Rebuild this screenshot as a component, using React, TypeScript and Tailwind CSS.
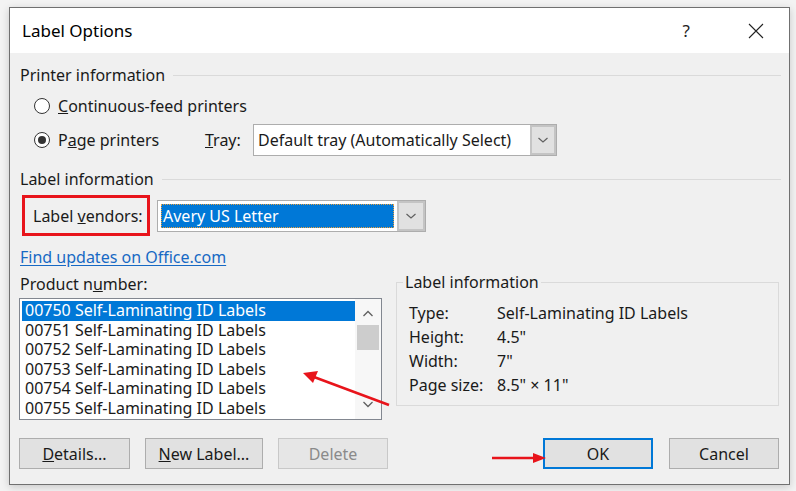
import React from "react";

const font = { fontFamily: '"Noto Sans", "Open Sans", sans-serif' };

function Radio({ checked }: { checked?: boolean }) {
  return (
    <span className="w-[16px] h-[16px] rounded-full border border-[#333] bg-white flex items-center justify-center shrink-0">
      {checked && <span className="w-[8px] h-[8px] rounded-full bg-[#333]" />}
    </span>
  );
}

function Chevron() {
  return (
    <svg width="12" height="8" viewBox="0 0 12 8">
      <path d="M1.5 2 L6 6 L10.5 2" fill="none" stroke="#606060" strokeWidth="1.2" />
    </svg>
  );
}

function Combo({ width, children }: { width: string; children: React.ReactNode }) {
  return (
    <div className={`flex h-[32px] border border-[#adadad] bg-white ${width}`}>
      <div className="flex-1 flex items-center px-[4px] overflow-hidden">{children}</div>
      <div className="w-[26px] bg-[#e1e1e1] border-[2px] border-[#c4c4c4] flex items-center justify-center">
        <Chevron />
      </div>
    </div>
  );
}

function SectionHeader({ title }: { title: string }) {
  return (
    <div className="flex items-center gap-[8px] h-[20px]">
      <span className="text-[16px] leading-[20px] text-[#1a1a1a] whitespace-nowrap">{title}</span>
      <div className="flex-1 h-px bg-[#dadada]" />
    </div>
  );
}

function Btn({ children, w, primary, disabled }: { children: React.ReactNode; w: string; primary?: boolean; disabled?: boolean }) {
  return (
    <button
      className={`h-[31px] ${w} bg-[#e1e1e1] text-[16px] flex items-center justify-center ${
        primary ? "border-2 border-[#0078d7]" : "border border-[#adadad]"
      } ${disabled ? "text-[#8a8a8a] border-[#c8c8c8] bg-[#e6e6e6]" : "text-[#1a1a1a]"}`}
    >
      {children}
    </button>
  );
}

export default function App() {
  const items = ["00750", "00751", "00752", "00753", "00754", "00755"];
  const info = [
    ["Type:", "Self-Laminating ID Labels"],
    ["Height:", "4.5\""],
    ["Width:", "7\""],
    ["Page size:", "8.5\" × 11\""],
  ];

  return (
    <div className="relative w-[796px] h-[491px] bg-[#f3f3f3] pt-[7px] pl-[9px]" style={font}>
      <div className="w-[781px] h-[478px] border border-[#707070] bg-[#f0f0f0] flex flex-col shadow-[0_2px_8px_rgba(0,0,0,0.18)]">
        {/* Title bar */}
        <div className="h-[45px] bg-white flex items-center pl-[12px] pr-[25px] shrink-0">
          <span className="text-[17px] text-black">Label Options</span>
          <span className="ml-auto text-[17px] text-[#222] mr-[58px]">?</span>
          <svg width="16" height="16" viewBox="0 0 16 16">
            <path d="M1 1 L15 15 M15 1 L1 15" stroke="#222" strokeWidth="1.1" />
          </svg>
        </div>

        {/* Body */}
        <div className="flex-1 pl-[10px] pr-[8px] text-[16px] leading-[20px] text-[#1a1a1a]">
          <div className="mt-[12px]">
            <SectionHeader title="Printer information" />
          </div>

          <div className="mt-[11px] h-[20px] flex items-center pl-[14px] gap-[8px]">
            <Radio />
            <span>
              <u>C</u>ontinuous-feed printers
            </span>
          </div>

          <div className="mt-[8px] h-[32px] flex items-center pl-[14px]">
            <Radio checked />
            <span className="ml-[8px] w-[147px]">
              P<u>a</u>ge printers
            </span>
            <span className="w-[48px]">
              <u>T</u>ray:
            </span>
            <Combo width="w-[304px]">
              <span className="whitespace-nowrap">Default tray (Automatically Select)</span>
            </Combo>
          </div>

          <div className="mt-[13px]">
            <SectionHeader title="Label information" />
          </div>

          <div className="mt-[6px] flex items-center">
            <div className="ml-[2px] w-[128px] h-[41px] border-[3px] border-[#e8141b] flex items-center pl-[8px]">
              <span className="whitespace-nowrap">
                Label <u>v</u>endors:
              </span>
            </div>
            <div className="ml-[7px]">
              <div className="flex h-[32px] w-[269px] border border-[#adadad] bg-white">
                <div className="flex-1 p-[3px]">
                  <div className="h-full bg-[#0078d7] text-white flex items-center pl-[2px] outline-1 outline-dotted outline-[#e8a040] -outline-offset-1">
                    Avery US Letter
                  </div>
                </div>
                <div className="w-[28px] bg-[#e1e1e1] border-[2px] border-[#c4c4c4] flex items-center justify-center">
                  <Chevron />
                </div>
              </div>
            </div>
          </div>

          <div className="mt-[11px] h-[20px] flex items-center">
            <span className="text-[#1769c4] underline underline-offset-2">Find updates on Office.com</span>
          </div>

          <div className="mt-[7px] flex">
            <div className="flex flex-col">
              <div className="h-[20px] flex items-center">
                Product n<u>u</u>mber:
              </div>
              <div className="mt-[4px] ml-[-1px] w-[363px] h-[122px] border border-[#828790] bg-white flex">
                <div className="flex-1 pt-[2px] pl-[2px] overflow-hidden">
                  {items.map((n, i) => (
                    <div
                      key={n}
                      className={`h-[19.6px] leading-[19.6px] pl-[3px] whitespace-nowrap ${
                        i === 0 ? "bg-[#0078d7] text-white" : ""
                      }`}
                    >
                      {n} Self-Laminating ID Labels
                    </div>
                  ))}
                </div>
                <div className="w-[26px] bg-[#f7f7f7] flex flex-col items-center">
                  <svg width="12" height="24" viewBox="0 0 12 24" className="mt-[2px]">
                    <path d="M1.5 15 L6 10.5 L10.5 15" fill="none" stroke="#606060" strokeWidth="1.3" />
                  </svg>
                  <div className="w-[22px] h-[25px] bg-[#cdcdcd]" />
                  <svg width="12" height="24" viewBox="0 0 12 24" className="mt-auto mb-[2px]">
                    <path d="M1.5 9 L6 13.5 L10.5 9" fill="none" stroke="#606060" strokeWidth="1.3" />
                  </svg>
                </div>
              </div>
            </div>

            <fieldset className="ml-[14px] mt-[-1px] w-[383px] h-[133px] border border-[#dadada] pl-[12px] pr-[8px] pt-[10px]">
              <legend className="px-[2px] ml-[-6px] leading-[18px]">Label information</legend>
              {info.map(([k, v]) => (
                <div key={k} className="flex h-[24px] items-center">
                  <span className="w-[88px]">{k}</span>
                  <span>{v}</span>
                </div>
              ))}
            </fieldset>
          </div>

          <div className="mt-[18px] flex items-center">
            <div className="ml-[-1px]">
              <Btn w="w-[111px]">
                <span>
                  <u>D</u>etails...
                </span>
              </Btn>
            </div>
            <div className="ml-[15px]">
              <Btn w="w-[118px]">
                <span>
                  <u>N</u>ew Label...
                </span>
              </Btn>
            </div>
            <div className="ml-[15px]">
              <Btn w="w-[110px]" disabled>
                Delete
              </Btn>
            </div>
            <div className="ml-auto">
              <Btn w="w-[110px]" primary>
                OK
              </Btn>
            </div>
            <div className="ml-[16px] mr-[2px]">
              <Btn w="w-[110px]">Cancel</Btn>
            </div>
          </div>
        </div>
      </div>

      {/* Annotation arrows */}
      <svg className="absolute left-0 top-0 pointer-events-none" width="796" height="491" viewBox="0 0 796 491">
        <line x1="389" y1="405" x2="314" y2="377" stroke="#e8141b" strokeWidth="2.5" />
        <path d="M303 373 L318 371 L313 383 Z" fill="#e8141b" />
        <line x1="492" y1="458" x2="535" y2="458" stroke="#e8141b" strokeWidth="2.5" />
        <path d="M546 458 L533 453 L533 463 Z" fill="#e8141b" />
      </svg>
    </div>
  );
}
